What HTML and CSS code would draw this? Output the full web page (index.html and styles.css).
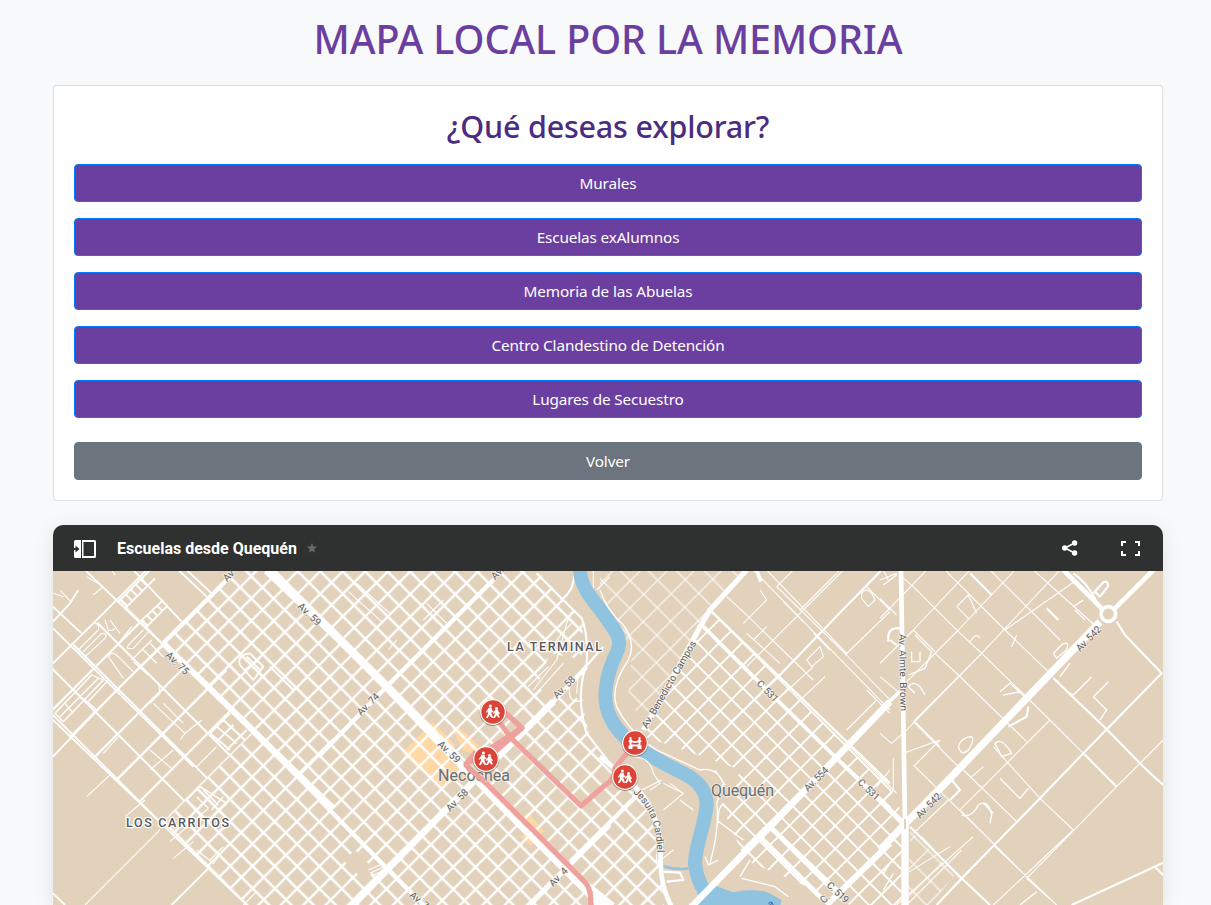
FILE: index.html
```html
<!DOCTYPE html>
<html lang="es">
<head>
<meta charset="utf-8">
<title>Mapa local por la memoria</title>
<link rel="stylesheet" href="styles.css">
</head>
<body>
<main class="container">
  <h1 class="title"><span>MAPA LOCAL POR LA MEMORIA</span></h1>
  <section class="card">
    <h2 class="card-title">¿Qué deseas explorar?</h2>
    <nav class="options">
      <a class="btn">Murales</a>
      <a class="btn">Escuelas exAlumnos</a>
      <a class="btn">Memoria de las Abuelas</a>
      <a class="btn">Centro Clandestino de Detención</a>
      <a class="btn">Lugares de Secuestro</a>
    </nav>
    <a class="btn btn-back">Volver</a>
  </section>
  <section class="map">
    <header class="map-bar">
      <svg class="ic-panel" width="24" height="20" viewBox="0 0 24 20"><path d="M2.500 1H8v18H2.500Q1 19 1 17.500V11h1.500v2.500L6.500 10 2.500 6.500V9H1V2.500Q1 1 2.500 1z" fill="#fff"/><path d="M9 1h12.500Q23 1 23 2.500v15q0 1.500-1.500 1.500H9zM10.500 3v14H21V3z" fill="#fff" fill-rule="evenodd"/></svg>
      <span class="map-name">Escuelas desde Quequén</span>
      <svg class="ic-star" width="12" height="12" viewBox="0 0 12 12"><path d="M6 .8l1.400 3.600 3.800.2-3 2.400 1 3.800L6 8.700l-3.200 2.100 1-3.800-3-2.400 3.800-.2z" fill="#686a6a"/></svg>
      <svg class="ic-share" width="18" height="18" viewBox="0 0 18 18"><path d="M13.500 4L4 9l9.500 5" fill="none" stroke="#fff" stroke-width="1.500"/><g fill="#fff"><circle cx="13.600" cy="4" r="2.700"/><circle cx="3.700" cy="9" r="2.700"/><circle cx="13.600" cy="14" r="2.700"/></g></svg>
      <svg class="ic-full" width="19" height="15" viewBox="0 0 19 15"><path d="M1 5V1h4M14 1h4v4M18 10v4h-4M5 14H1v-4" fill="none" stroke="#fff" stroke-width="2"/></svg>
    </header>
    <svg class="map-canvas" width="1110" height="334" viewBox="53 571 1110 334">
      <defs>
        <pattern id="dense-ne" x="1253" y="-273.500" width="22.600" height="22.400" patternUnits="userSpaceOnUse" patternTransform="matrix(.5 .5 .5 -.5 0 0)"><path d="M0 0V22.400M22.600 0V22.400M0 0H22.600M0 22.400H22.600" stroke="#fff" stroke-width="3.300" fill="none"/></pattern>
        <pattern id="dense-sw" x="1253" y="-325" width="22.400" height="22.200" patternUnits="userSpaceOnUse" patternTransform="matrix(.5 .5 .5 -.5 0 0)"><path d="M0 0V22.200M22.400 0V22.200M0 0H22.400M0 22.200H22.400" stroke="#fff" stroke-width="3.300" fill="none"/></pattern>
        <pattern id="wide" x="807" y="-480" width="44.700" height="45.500" patternUnits="userSpaceOnUse" patternTransform="matrix(.5 .5 .5 -.5 0 0)"><path d="M0 0V45.500M44.700 0V45.500M0 0H44.700M0 45.500H44.700" stroke="#fff" stroke-width="3" fill="none"/></pattern>
        <pattern id="town" x="1454" y="77.500" width="23" height="22.700" patternUnits="userSpaceOnUse" patternTransform="matrix(.5 .5 .5 -.5 0 0)"><path d="M0 0V22.700M23 0V22.700M0 0H23M0 22.700H23" stroke="#fff" stroke-width="2.700" fill="none"/></pattern>
        <pattern id="thin" x="1454" y="77.500" width="27" height="28" patternUnits="userSpaceOnUse" patternTransform="matrix(.5 .5 .5 -.5 0 0)"><path d="M0 0V28M27 0V28M0 0H27M0 28H27" stroke="#fff" stroke-width="1.500" fill="none"/></pattern>
        <g id="kids" fill="#fff"><circle cx="-2.600" cy="-5.900" r="1.500"/><path d="M-4.300-4.200h2.700l.8 2.500 1.400 1.100-.5 1-1.600-.6v2l1.800 3.900h-2L-3.400 3-5.200 6h-2l2.100-4v-2.800l-1 1.500-1.200-.5z"/><circle cx="3.500" cy="-3.500" r="1.500"/><path d="M2.200-1.900h2.700l.9 2 1.300.9-.5 1-1.300-.5 1.600 4H5.100L3.600 3.200 1.800 6h-2l1.900-3.600V.5L.6 1.900l-1-.6z"/></g>
        <g id="disc"><circle r="13.300" cy=".7" fill="#6b5a4b" opacity=".55"/><circle r="12.900" fill="#fff"/><circle r="11.700" fill="#db4437"/></g>
      </defs>
      <path class="land" d="M53 571H1163V905H53z"/>
      <g class="shop">
        <path d="M402 753L433 722 455 745 449 760 467 778 438 787 424 770 420 771z"/>
        <path d="M452 729l6-3 23 22-5 7-13-5zM520 820l8-7 16 18-13 15-10-9 7-9z"/>
      </g>
      <path fill="url(#dense-ne)" d="M271 571H537L583 619 582 655 558 680 582 703 591 743 625 777 655 817 664 905H605z"/>
      <path fill="url(#dense-sw)" d="M236 571H271L605 905H247L162 824 252 734 163 643z"/>
      <path fill="url(#wide)" d="M75 645L120 600 163 643 252 734 162 824 53 720V667z"/>
      <path fill="url(#town)" d="M703 620L712 612 890 788 905 820V905H850L745 860 722 806 741 770 640 735z"/>
      <path fill="url(#thin)" d="M600 600V571H745L703 620 650 725 628 703 632 650zM910 830L955 875 930 905H908z"/>

      <g class="roads" transform="translate(50 570) scale(.33333)">
        <path class="w5" d="M105 0L340 225M9 175L430 590M9 450L590 1005M9 560L205 355 340 225M9 280L135 155 290 0M250 0L395 155M205 625L405 425 530 300M9 970L45 1005M365 1005L475 895M70 225L135 290M9 110L95 190M9 155L60 100 85 60"/>
        <path class="w3" d="M110 680L185 610M270 695L340 625M105 1005L330 780M300 540l70 60M300 600l70-60M85 240l60-60q5-15-10-20M105 260l60-55q10-15-10-15l-55 55M175 260q10-20 30 0l45 45M175 260l45 65M240 220q-20 20 10 15l50-55M240 220l40-40M210 190l-30-40M165 150l10 30q10 5 20-5M205 220l40-50M130 75l30-25-50-30M185 0l10 15M30 60l35 38M10 70l30 10M155 540l40-40M160 550l45-50M300 400l30-30-5-30M310 400l95 90 50-40M390 510l15-20M360 815l115-100M370 865l60-50M440 840l50 40 30-40M480 870l40-40M225 740l60-50M550 900l30 25M580 1005l40-40M440 590l60-60M340 400l60 60"/>
        <path class="w4" d="M15 430L125 315 160 330 40 455zM45 400l25 30M80 370l30 30M30 440L145 325M110 400L175 330M100 385l40 35M245 270l60-60M250 275l45 40M280 240l40 40M300 220l40 40M410 690l40-40 80 50-60 60zM440 680l35 35M460 660l45 45M485 720l35-40"/>
        <path class="w5" d="M205 95L300 0M225 115L315 25M212 88l18 18M227 73l18 18M242 58l18 18M257 43l18 18M272 28l18 18M265 160l75-70M285 175l65-65M275 150l18 18M290 135l18 18M305 120l18 18M320 105l18 18"/>
        <path class="w5" d="M385 0l85 80M410 0l80 75M480 490l60 50M500 470l60 50M520 450l65 60M480 490l60-60M500 515l50-50M530 540l60-60M570 285q-10-30 30-35l40 40-30 40zM590 260l40 40M585 300l40-30M660 290l70 70"/>
        <path class="w12" d="M340 220L540 20"/>
        <path class="w18" d="M340 220L850 715"/>
        <path class="w10" d="M740 620L850 510"/>
        <path class="w24" d="M650 0L850 190"/>
      </g>
      <g class="roads" transform="translate(320 570) scale(.33333)">
        <path class="land" stroke="none" d="M72 872L104 840 165 900 133 932zM690 250L795 270 785 330 700 380 650 350z"/>
        <path class="w3" d="M640 360l70-90 30-110 15-35M690 240l35-50 30-30M625 350l60-60M640 380l90-100M750 340q-10 70 40 50M775 310l-5 60M820 0v60l50 90M830 60l40-40M145 900l35-15M150 910l38-18M155 918l38-18M85 65l100 90M110 40l100 90M230 210l-25 30M310 150l60-60M320 100l60 60"/>
        <path class="w6" d="M762 0q5 60-40 90M650 10L720 80 785 145Q805 190 800 280 765 380 800 490L870 580M850 230l-70 80M800 285l-60 70"/>
        <path class="w12" d="M0 555L210 340 520 30"/>
        <path class="w24" d="M0 150L200 350 400 560 440 605"/>
        <path class="w12" d="M440 605L560 730 870 1040M0 690L190 885 310 1005"/>
        <path class="w20" d="M85 1020L210 890 480 615 700 395"/>
        <path class="w12" d="M700 395L800 290M630 1005L740 895 870 765M800 940L880 1005"/>
      </g>
      <g transform="translate(600 570) scale(.33333)">
        <path class="river" d="M-60 0C-60 60 0 110 30 160 70 210 60 230 40 270 20 320 0 390 35 450 70 520 170 570 250 610 310 640 325 680 318 720 310 780 285 830 285 880 290 930 310 960 330 990"/>
        <path class="sea" d="M285 1010L340 945 400 967Q440 955 500 965L545 990 540 1010z"/>
        <path d="M190 888q30 12 75 8" fill="none" stroke="#8fc3df" stroke-width="8"/>
      </g>
      <g class="roads" transform="translate(600 570) scale(.33333)">
        <path class="w4" d="M0 60Q20 120 70 165 110 220 85 270 30 350 50 410 90 490 170 540L300 600Q350 590 370 640L350 700Q360 770 330 880M345 600L375 645M350 750l80 60M370 700Q350 720 355 760M420 920l30-50M425 925l100 25 40 30M315 860l10 25 30-15"/>
        <path class="w3" d="M100 560q50 0 60 50l20 30-30 20M125 660l60-30M190 640l60 30-60 50M250 670l-40-30M240 690l40 30M170 880l50-40M170 880v-30"/>
        <path class="w3" d="M460 0L830 380 870 420M530 50L740 255 870 390M380 80L435 130 640 330M580 0L530 50M730 0L440 290M600 120L720 0M800 50L870 120M735 255L870 125M640 290L520 400M550 95l60 60M500 0L740 250M430 160L500 90 480 60M440 190l100 90M460 210l40-40M490 240l40-40M620 270l40-40 10 30-35 30zM640 190l50 50M870 430L800 360M675 320L580 410M830 390L740 480M870 600L830 650M740 520l130 130M785 70q10-20 30 0l10 20-20 20-20-25zM850 0l15 30"/>
        <path class="w6" d="M845 0L730 118 530 325 390 460"/>
        <path class="w7" d="M335 125L870 640"/>
        <path class="w10" d="M310 170L460 320 705 560 870 715M470 0L482 35"/>
        <path class="w20" d="M870 395L510 770 270 1015"/>
        <path class="w14" d="M480 800L670 990M510 770L720 970"/>
        <path class="w15" d="M440 0L330 120 300 170 215 330 130 480"/>
        <path class="w18" d="M680 1005L870 820"/>
        <path class="w10" d="M-10 795L110 675M-90 875L-10 795"/>
        <path class="w6" d="M190 905L240 908 250 930 200 935"/>
        <path class="w14" d="M0 560L50 600 110 655Q175 720 183 840 175 940 215 1010"/>
        <path class="w15" d="M-20 970L20 1010"/>
      </g>
      <g class="roads" transform="translate(880 570) scale(.33333)">
        <path class="w3" d="M65 20L100 50 165 115 235 185 305 250 510 450M195 0L375 180 520 320M330 0L440 110 540 210M460 0L660 180M140 0L0 145M270 0L100 180 0 280M405 0L235 180 80 335M540 0L305 250 100 455M590 30L375 180M100 180l65 65M165 250L235 315 440 515M305 250L80 480M70 550L180 510M105 455L180 530M105 590L340 820M0 490l35 30 45-40M100 590L180 510M510 450L340 620 240 720M510 450L610 550M340 530L480 685 580 780M250 600L410 755M580 780L340 1005M710 650L440 925M850 510L710 650M340 825L530 1005M100 455L245 600M245 725L445 925M205 690L100 790M310 590l-40 35M230 110l35 35M265 75l-35 35M290 130L265 75M0 85L50 135M0 320L60 370M0 620L50 670M40 565V660L0 700M80 910L210 830M80 1005L245 840M210 965L410 755M125 800l120 130M440 925L530 1005M270 215q20-30 30-10M395 230l15-35M50 1005L280 800"/>
        <path class="w4" d="M95 245v30h25v-30M105 195l50 50-20 50-50 20M85 350q15-20 35 0l15 25M85 350l20 20M235 530q10-30 40-30 10 10-10 40-20 20-30-10M345 520q20-20 50 30l-30 10zM360 365l30-25 50 45-35 25M370 375l50-10M520 250l30-30q20-5 10 20l-30 25zM540 320l30-40M530 330q20 30 50 45M640 380l45-45M640 380l40 40-20 30M580 375l55-55M360 625l60 60 25-30M245 735q30 10 50-30 30-20 40 30l-5 25M310 700l30 30M10 960l30-50M30 880l-20 30M420 1005l50-40M0 30l50-20M10 45l40-30M580 110l30-20M585 120l30 30"/>
        <path class="w6" d="M210 690L240 660 215 630M385 470l55-30 5-30M270 10l65 65M500 115l35 35M640 70l30-33q14-8 14 12l-24 31-17-17M25 215Q20 170 60 175M30 210l20 15"/>
        <path class="w6" d="M520 325L680 478 780 580Q820 620 850 645M710 155L735 195 845 310 610 550 480 685 245 925 170 1005M610 550L710 650M575 1005L850 878M825 890l25 25M650 95q-30-60-70-85"/>
        <path class="w10" d="M0 420L60 365M0 690L75 760"/>
        <path class="w6" d="M90 770L240 920 330 1005"/>
        <path class="w14" d="M63 0L75 760M550 0L665 115M705 115L820 0"/>
        <path class="w22" d="M0 840L75 762 210 625 660 155M75 760V1010"/>
        <circle cx="685" cy="132" r="22" class="w10"/>
        <path d="M75 747v30" stroke="#e2d2bc" stroke-width="6"/>
      </g>
      <path class="route" d="M492 712L511 738 581 806 604 786Q615 779 615 768L635 743M497 705L522 728 466 764 471 772M465 764Q480 778 484 781L585 882Q591 888 591 905"/>

      <g class="streets">
        <text transform="translate(227 582) rotate(-45)">Av.</text>
        <text transform="translate(297 607) rotate(44)" textLength="28">Av. 59</text>
        <text transform="translate(165 656) rotate(44)" textLength="28">Av. 75</text>
        <text transform="translate(495 580) rotate(-45)">Av.</text>
        <text transform="translate(361 716) rotate(-45)" textLength="27">Av. 74</text>
        <text transform="translate(557 699) rotate(-45)" textLength="27">Av. 58</text>
        <text transform="translate(437 745) rotate(44)" textLength="27">Av. 59</text>
        <text transform="translate(450 812) rotate(-45)" textLength="27">Av. 58</text>
        <text transform="translate(553 887) rotate(-45)" textLength="22">Av. 4</text>
        <text transform="translate(409 896) rotate(40)">Av. 7</text>
        <text transform="translate(647 729) rotate(-60)" textLength="99">Av. Benedicto Campos</text>
        <text transform="translate(756 684) rotate(46)" textLength="26">C. 531</text>
        <text transform="translate(857 783) rotate(44)" textLength="26">C. 531</text>
        <text transform="translate(808 792) rotate(-45)" textLength="30">Av. 554</text>
        <text transform="translate(920 819) rotate(-45)" textLength="31">Av. 542</text>
        <text transform="translate(1080 652) rotate(-45)" textLength="31">Av. 542</text>
        <text transform="translate(899 634) rotate(89)" textLength="77">Av. Almte. Brown</text>
        <text transform="translate(826 886) rotate(43)" textLength="26">C. 519</text>
        <text transform="translate(824 904) rotate(-45)">C.</text>
        <text class="sea-name" transform="translate(770 908) rotate(-30)">a</text>
        <path id="jes" d="M629 789Q658 812 657 854" fill="none" stroke="none"/>
        <text><textPath href="#jes" textLength="72">. Jesuita Cardiel</textPath></text>
      </g>
      <g class="towns">
        <text class="zone" x="507" y="651" textLength="96">LA TERMINAL</text>
        <text class="zone" x="126" y="826.500" textLength="104">LOS CARRITOS</text>
        <text class="city" x="438" y="780.500" textLength="72">Necochea</text>
        <text class="city" x="711" y="795.500" textLength="63">Quequén</text>
      </g>
      <path class="route" d="M466 765Q474 773 485 782M522 728L488 758M476 752L466 764"/>
      <g transform="translate(493 712)"><use href="#disc"/><use href="#kids"/></g>
      <g transform="translate(486 759)"><use href="#disc"/><use href="#kids"/></g>
      <g transform="translate(625 777)"><use href="#disc"/><use href="#kids"/></g>
      <g transform="translate(635 743)"><use href="#disc"/><path fill="#fff" d="M-5.500-6h2v3q3.500 2.500 7 0v-3h2v3l1 1v1h-1v3.500h1V6h-4V3.500h-5V6h-4V2.500h1V-1h-1v-1l1-1zM-3.500-.8v2.300h7V-.8q-3.500 1.500-7 0z"/></g>
    </svg>
  </section>
</main>
</body>
</html>
```
FILE: styles.css
```css
* { box-sizing: border-box; }
html, body { height: 905px; overflow: hidden; }
body { margin: 0; background: #f8f9fa; font-family: "Noto Sans", "Open Sans", sans-serif; font-size: 16px; line-height: 24px; }
.container { width: 1110px; margin-left: 53px; padding-top: 15px; }
.title { margin: 0 0 22px; text-align: center; color: #6b3fa0; font-size: 39.5px; font-weight: 500; letter-spacing: -.12px; line-height: 48px; white-space: nowrap; }
.card { display: flex; flex-direction: column; height: 416px; padding: 20px; background: #fff; border: 1px solid rgba(0, 0, 0, .125); border-radius: 4px; }
.card-title { margin: 1px 0 19px; text-align: center; color: #4b2c7f; font-size: 30.5px; font-weight: 500; letter-spacing: -.2px; line-height: 38px; }
.options { display: flex; flex-direction: column; gap: 16px; margin-bottom: 24px; }
.btn { display: block; height: 38px; padding: 6px 12px; border: 1px solid #007bff; border-radius: 4px; background: #6b3fa0; color: #fff; text-align: center; font-size: 15.3px; letter-spacing: -.13px; line-height: 24px; }
.btn-back { background: #6c757d; border-color: #6c757d; }
.map { margin-top: 24px; border-radius: 10px 10px 0 0; overflow: hidden; box-shadow: 0 4px 20px rgba(0, 0, 0, .1); }
.map-bar { display: flex; align-items: center; height: 46px; padding: 0 23px 0 20px; background: #2e3130; color: #fff; font-family: Roboto, sans-serif; }
.map-name { margin: 2px 9px 0 20px; font-size: 16px; font-weight: 700; }
.ic-panel { margin-top: 2px; }
.ic-share { margin-left: auto; margin-right: 42px; }
.map-canvas { display: block; }
.land { fill: #e2d2bc; }
.shop { fill: #ffd8a6; }
.roads { fill: none; stroke: #fff; stroke-linejoin: round; }
.w3 { stroke-width: 3.2; }
.w4 { stroke-width: 4; }
.w5 { stroke-width: 5.5; }
.w6 { stroke-width: 6.5; }
.w7 { stroke-width: 7; }
.w10 { stroke-width: 11; }
.w12 { stroke-width: 13; }
.w14 { stroke-width: 14; }
.w15 { stroke-width: 16; }
.w18 { stroke-width: 18; }
.w20 { stroke-width: 20; }
.w22 { stroke-width: 22; }
.w24 { stroke-width: 24; }
.river { fill: none; stroke: #8fc3df; stroke-width: 42; }
.sea { fill: #8fc3df; }
.route { fill: none; stroke: #eea19d; stroke-width: 5.2; stroke-linejoin: round; }
.map-canvas text { font-family: Roboto, sans-serif; paint-order: stroke; stroke-linejoin: round; }
.streets { font-size: 10px; fill: #5c6064; stroke: #f6f0e8; stroke-width: 1.5px; }
.sea-name { fill: #2b66b8; stroke: none; }
.towns { fill: #6a6f74; stroke: #fff; stroke-width: 2.5px; }
.zone { font-size: 12.5px; font-weight: 500; letter-spacing: 1px; fill: #55595e; }
.city { font-size: 16px; stroke: #f3ece2; stroke-width: 1.5px; }
```
